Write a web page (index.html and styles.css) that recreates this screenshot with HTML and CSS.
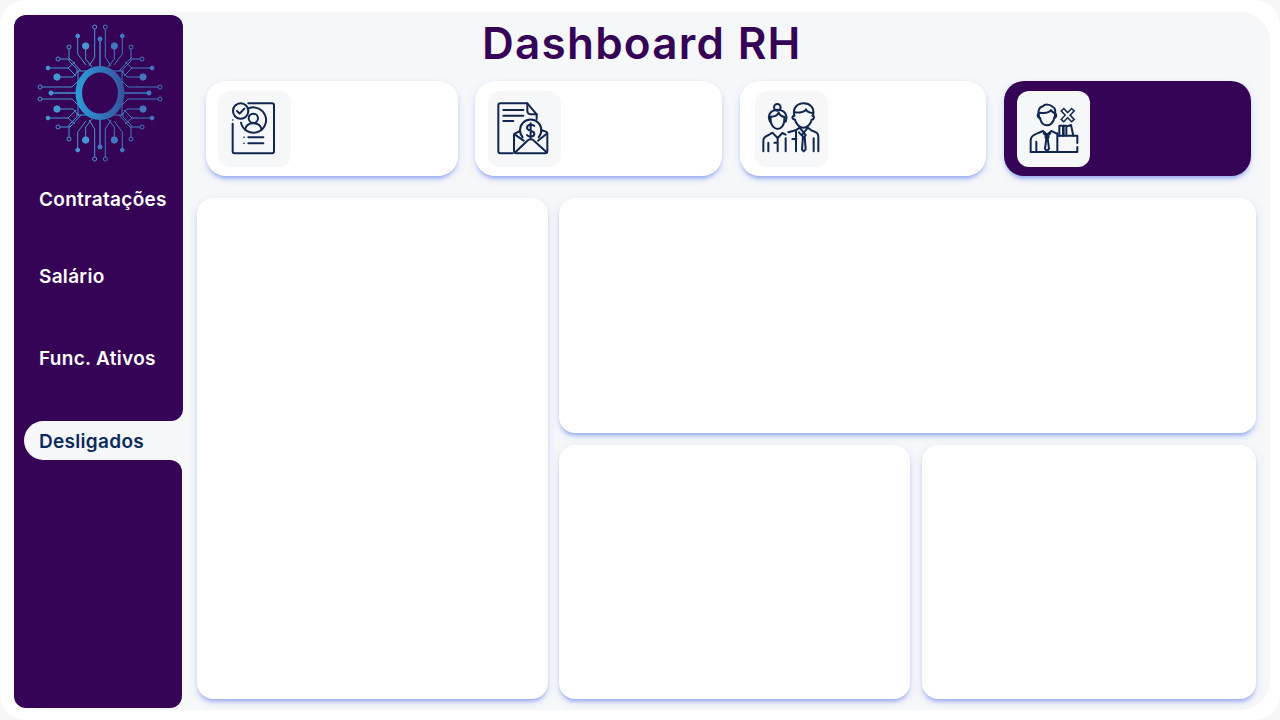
FILE: index.html
```html
<!DOCTYPE html>
<html lang="pt-BR">
<head>
<meta charset="utf-8">
<title>Dashboard RH</title>
<link rel="stylesheet" href="styles.css">
</head>
<body>
<div class="shell">
  <div class="panel">
    <aside class="sidebar">
      <div class="side-top">
        <svg class="logo" viewBox="-70 -72 140 144" aria-hidden="true">
          <defs>
            <linearGradient id="ringGrad" gradientUnits="userSpaceOnUse" x1="-25" y1="0" x2="25" y2="0">
              <stop offset="0" stop-color="#2b9fdc"/>
              <stop offset="1" stop-color="#37519c"/>
            </linearGradient>
            <g id="quad" fill="none" stroke="currentColor" stroke-width="1">
              <path d="M-5.3 -64V-36L-11 -27M-22.3 -55V-39L-14 -28M-14.3 -45V-34L-8 -26M-31 -44V-32L-23 -24V-20M-40 -34H-30L-19 -22M-52 -25H-32L-25 -31M-32 -25L-24 -17M-43 -16H-27L-20 -24M-58 -6H-28L-22 -12M-47 0H-22M0 -54V-25"/>
              <path d="M-22 0V-22H0"/>
              <circle cx="-5.3" cy="-66" r="2"/>
              <circle cx="-31" cy="-46" r="2"/>
              <circle cx="-42" cy="-34" r="2"/>
              <circle cx="-60" cy="-6" r="2"/>
              <circle cx="-22.3" cy="-57" r="1.9" fill="currentColor"/>
              <circle cx="-14.3" cy="-47" r="3.2" fill="currentColor"/>
              <circle cx="-52" cy="-25" r="1.9" fill="currentColor"/>
              <circle cx="-43" cy="-16" r="3.2" fill="currentColor"/>
              <circle cx="-49" cy="0" r="1.9" fill="currentColor"/>
              <circle cx="0" cy="-54" r="1.9" fill="currentColor"/>
            </g>
          </defs>
          <use href="#quad" class="quad-left"/>
          <use href="#quad" class="quad-left" transform="scale(1 -1)"/>
          <use href="#quad" class="quad-right" transform="scale(-1 1)"/>
          <use href="#quad" class="quad-right" transform="scale(-1 -1)"/>
          <ellipse cx="0" cy="0" rx="21.2" ry="23.8" fill="#360456" stroke="url(#ringGrad)" stroke-width="6.6"/>
        </svg>
        <nav class="nav">
          <a class="nav-item nav-1">Contratações</a>
          <a class="nav-item nav-2">Salário</a>
          <a class="nav-item nav-3">Func. Ativos</a>
        </nav>
      </div>
      <div class="side-active"><a class="pill">Desligados</a></div>
      <div class="side-bottom"></div>
    </aside>
    <main class="main">
      <h1 class="title">Dashboard RH</h1>
      <section class="kpis">
        <div class="kpi kpi-a">
          <div class="tile">
            <svg class="icon" viewBox="54 48 219 228" aria-hidden="true">
              <path d="M145 85H216a6 6 0 0 1 6 6V229a6 6 0 0 1-6 6H104a6 6 0 0 1-6-6V146"/>
              <circle cx="98" cy="135" r="2.5" class="dot"/>
              <circle cx="122" cy="108" r="23"/>
              <path d="M111 108l8 8 14-15"/>
              <path d="M146 100A38 38 0 1 1 123 143"/>
              <circle cx="160" cy="130" r="14"/>
              <path d="M135 164c3-14 14-19 25-19s22 5 25 19"/>
              <path d="M145 187H190M145 205H190"/>
              <circle cx="132" cy="187" r="2.5" class="dot"/>
              <circle cx="132" cy="205" r="2.5" class="dot"/>
            </svg>
          </div>
        </div>
        <div class="kpi kpi-b">
          <div class="tile">
            <svg class="icon" viewBox="54 48 219 228" aria-hidden="true">
              <path d="M128 235H91a6 6 0 0 1-6-6V91a6 6 0 0 1 6-6H172L200 118V132"/>
              <path d="M172 85V108a10 10 0 0 0 10 10H200"/>
              <path d="M100 105H160M100 122H160M100 138H130"/>
              <path d="M150 168L136 175a5 5 0 0 0-4 5V228a7 7 0 0 0 7 7H225a7 7 0 0 0 7-7V175a5 5 0 0 0-4-5L213 165"/>
              <path d="M134 178L161 197M230 176L204 197M136 232L172 197a14 14 0 0 1 20 0L230 232"/>
              <path d="M158 187A32 32 0 1 1 206 187"/>
              <path d="M193 153c-4-6-22-6-22 5 0 12 22 6 22 18 0 11-18 11-22 4M182 145V192"/>
            </svg>
          </div>
        </div>
        <div class="kpi kpi-c">
          <div class="tile">
            <svg class="icon" viewBox="60 48 219 228" aria-hidden="true">
              <circle cx="127" cy="97" r="10"/>
              <path d="M105 140c-10-22 5-36 23-36s32 14 24 36"/>
              <path d="M108 125c12 0 20-5 23-12 3 7 10 12 18 13"/>
              <path d="M107 125v10c0 17 12 27 21 27s20-10 20-27v-9"/>
              <path d="M85 229V197c0-10 7-14 16-17l11-7 16 16 14-15 10 5"/>
              <path d="M100 229V203M152 229V190M118 203H128M128 189V229"/>
              <path d="M178 122c-6-24 10-37 28-37s34 12 28 37"/>
              <path d="M180 112c16 2 30-2 33-9 2 5 10 10 20 11"/>
              <path d="M178 122c-8 0-8 10 2 12 3 14 15 24 25 24s23-10 25-24c9-2 9-12 2-12"/>
              <path d="M160 172l22-6 12-8 12 15 13-15 10 8 12 5c8 3 9 8 9 16V229"/>
              <path d="M236 229V190M172 192H184M206 173l-5 7 3 5-3 38 5 6 6-6-3-38 3-5zM192 172L200 181M183 229V168"/>
            </svg>
          </div>
        </div>
        <div class="kpi kpi-d">
          <div class="tile">
            <svg class="icon" viewBox="51 48 219 228" aria-hidden="true">
              <path d="M119 130c-8-22-2-33 10-36 4-7 22-7 28 1 10 3 11 18 6 34"/>
              <path d="M119 113c16 2 30-1 34-8 2 4 6 7 10 8"/>
              <path d="M119 115c-8 0-8 12 1 14 3 14 12 22 21 22s19-8 22-22c7-1 8-14 0-14"/>
              <path d="M92 230V196c0-12 8-17 20-21l17-7 12 11 13-11 15 7"/>
              <path d="M109 230V200M131 175l10 10 10-10M136 186l5-2 5 2-3 5 4 30-6 8-6-8 4-30z"/>
              <path d="M92 231H232V216M232 204V182H172V231M172 182V175"/>
              <path d="M178 182V152H189V182M191 182V152H199V182M201 154L213 150 220 182"/>
              <path d="M191 108L215 133M215 108L191 133" class="x-outer"/>
              <path d="M191 108L215 133M215 108L191 133" class="x-inner"/>
            </svg>
          </div>
        </div>
      </section>
      <section class="charts">
        <div class="chart chart-tall"></div>
        <div class="chart chart-wide"></div>
        <div class="chart"></div>
        <div class="chart chart-last"></div>
      </section>
    </main>
  </div>
</div>
</body>
</html>
```

FILE: styles.css
```css
* { box-sizing: border-box; }
html, body { margin: 0; height: 100%; }
body {
  background: #f5f7f9;
  font-family: "Inter", "Liberation Sans", sans-serif;
  overflow: hidden;
}
.shell {
  width: 1280px;
  height: 720px;
  background: #fff;
  border-radius: 26px;
  padding: 12px 10px 10px 14px;
}
.panel {
  height: 698px;
  background: #f5f7f9;
  border-radius: 30px;
  display: flex;
  padding: 3px 0 2px 0;
  gap: 14px;
}
.sidebar {
  width: 169px;
  flex: none;
  display: flex;
  flex-direction: column;
}
.side-top {
  height: 406px;
  background: #360456;
  border-radius: 12px 12px 12px 0;
  display: flex;
  flex-direction: column;
}
.logo {
  display: block;
  width: 140px;
  height: 144px;
  margin: 6px 0 0 16px;
  filter: blur(.4px);
}
.quad-left { color: #4596d2; }
.quad-right { color: #4178bf; }
.nav { display: flex; flex-direction: column; padding-left: 25px; }
.nav-item {
  display: block;
  height: 24px;
  line-height: 24px;
  font-size: 19px;
  font-weight: 600;
  letter-spacing: .3px;
  color: #fff;
  white-space: nowrap;
}
.nav-1 { margin-top: 23px; }
.nav-2 { margin-top: 53px; }
.nav-3 { margin-top: 58px; }
.side-active {
  height: 39px;
  background: #360456;
  padding-left: 10px;
  margin-right: -1px;
  width: 169px;
  display: flex;
}
.pill {
  flex: none;
  width: 171px;
  height: 39px;
  line-height: 42px;
  padding-left: 15px;
  background: #f5f7f9;
  border-radius: 20px 0 0 20px;
  color: #0b2a5e;
  font-size: 19px;
  font-weight: 600;
  letter-spacing: .3px;
}
.side-bottom {
  width: 168px;
  flex: 1;
  background: #360456;
  border-radius: 0 12px 12px 12px;
}
.main {
  width: 1059px;
  flex: none;
  display: flex;
  flex-direction: column;
}
.title {
  margin: 0;
  height: 66px;
  line-height: 57px;
  padding-left: 285px;
  font-size: 44px;
  font-weight: 600;
  letter-spacing: 1.25px;
  color: #360456;
  white-space: nowrap;
}
.kpis { display: flex; padding-left: 9px; }
.kpi {
  height: 95px;
  background: #fff;
  border-radius: 20px;
  padding: 10px 0 9px 12px;
  box-shadow: 0 4px 4px -2px rgba(90, 120, 235, .6), 0 3px 9px rgba(90, 120, 235, .16);
}
.kpi-a { width: 252px; margin-right: 17px; }
.kpi-b { width: 247px; margin-right: 18px; padding-left: 13px; }
.kpi-c { width: 246px; margin-right: 18px; padding-left: 15px; }
.kpi-d { width: 247px; background: #360456; padding-left: 13px; }
.tile {
  width: 73px;
  height: 76px;
  background: #f5f7f9;
  border-radius: 12px;
}
.icon {
  display: block;
  width: 73px;
  height: 76px;
  fill: none;
  stroke: #10264f;
  stroke-width: 6;
  stroke-linecap: round;
  stroke-linejoin: round;
}
.icon .dot { fill: #10264f; stroke: none; }
.icon .x-outer { stroke-width: 15; stroke-linecap: square; }
.icon .x-inner { stroke: #f5f7f9; stroke-width: 6; stroke-linecap: square; }
.charts {
  margin-top: 22px;
  display: grid;
  grid-template-columns: 351px 351px 335px;
  grid-template-rows: 235px 254px;
  column-gap: 11px;
  row-gap: 12px;
}
.chart {
  background: #fff;
  border-radius: 16px;
  box-shadow: 0 4px 4px -2px rgba(90, 120, 235, .6), 0 3px 9px rgba(90, 120, 235, .16);
}
.chart-tall { grid-row: 1 / 3; }
.chart-wide { grid-column: 2 / 4; }
.chart-last { margin-left: 1px; }
```
